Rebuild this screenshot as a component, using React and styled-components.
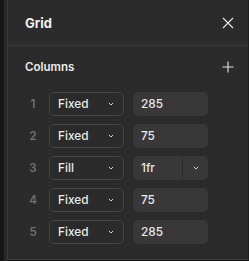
import React from 'react';
import styled, { createGlobalStyle } from 'styled-components';

const Global = createGlobalStyle`
  html, body {
    margin: 0;
    padding: 0;
    background: #161616;
  }
  body {
    font-family: Inter, "Noto Sans", sans-serif;
    -webkit-font-smoothing: antialiased;
  }
`;

const Frame = styled.div`
  width: 249px;
  height: 261px;
  display: flex;
  background: #161616;
  padding-left: 4px;
  box-sizing: border-box;
  overflow: hidden;
`;

const Gutter = styled.div`
  width: 3px;
  background: #292929;
`;

const Panel = styled.div`
  flex: 1;
  height: 260px;
  background: #2b2b2b;
  border-left: 1px solid #3a3a3a;
  border-bottom: 1px solid #3a3a3a;
  border-right: 1px solid #1f1f1f;
  box-sizing: border-box;
  display: flex;
  flex-direction: column;
`;

const Header = styled.div`
  height: 45px;
  display: flex;
  align-items: center;
  justify-content: space-between;
  padding: 0 14px 0 17px;
  border-bottom: 1px solid #3b3b3b;
  box-sizing: content-box;
`;

const Title = styled.h2`
  margin: 0;
  font-size: 13px;
  font-weight: 700;
  color: #f0f0f0;
`;

const IconButton = styled.button`
  background: none;
  border: 0;
  padding: 0;
  width: 12px;
  height: 12px;
  display: flex;
  align-items: center;
  justify-content: center;
  color: #e6e6e6;
`;

const Section = styled.div`
  padding: 0 14px 0 17px;
`;

const SectionHead = styled.div`
  height: 42px;
  display: flex;
  align-items: center;
  justify-content: space-between;
  margin-bottom: 4px;
`;

const SectionTitle = styled.span`
  font-size: 11.5px;
  font-weight: 600;
  color: #ececec;
`;

const Rows = styled.div`
  display: flex;
  flex-direction: column;
  gap: 8px;
`;

const Row = styled.div`
  display: grid;
  grid-template-columns: 16px 75px 76px;
  column-gap: 8px;
  align-items: center;
  height: 24px;
  & > :nth-child(3) { margin-left: 1px; }
`;

const Index = styled.span`
  font-size: 11.5px;
  font-weight: 600;
  color: #6f6f6f;
  text-align: center;
`;

const Select = styled.div`
  height: 24px;
  box-sizing: border-box;
  border: 1px solid #444;
  border-radius: 5px;
  display: flex;
  align-items: center;
  justify-content: space-between;
  padding: 0 9px 0 8px;
  font-size: 11.8px;
  font-weight: 500;
  color: #eaeaea;
`;

const Field = styled.div`
  height: 24px;
  border-radius: 5px;
  background: #383838;
  display: flex;
  align-items: center;
  overflow: hidden;
  font-size: 11.8px;
  font-weight: 500;
  color: #eaeaea;
`;

const FieldValue = styled.span`
  flex: 1;
  padding-left: 8px;
`;

const FieldMenu = styled.span`
  width: 25px;
  height: 100%;
  border-left: 1px solid #2b2b2b;
  display: flex;
  align-items: center;
  justify-content: center;
`;

const Chevron = () => (
  <svg width="6" height="4" viewBox="0 0 6 4" fill="none">
    <path d="M0.8 0.8 L3 3 L5.2 0.8" stroke="#cfcfcf" strokeWidth="1" />
  </svg>
);

const columns = [
  { type: 'Fixed', value: '285' },
  { type: 'Fixed', value: '75' },
  { type: 'Fill', value: '1fr', menu: true },
  { type: 'Fixed', value: '75' },
  { type: 'Fixed', value: '285' },
];

export default function App() {
  return (
    <>
      <Global />
      <Frame>
        <Gutter />
        <Panel>
          <Header>
            <Title>Grid</Title>
            <IconButton aria-label="Close">
              <svg width="12" height="12" viewBox="0 0 12 12">
                <path d="M1 1 L11 11 M11 1 L1 11" stroke="#e6e6e6" strokeWidth="1.1" />
              </svg>
            </IconButton>
          </Header>
          <Section>
            <SectionHead>
              <SectionTitle>Columns</SectionTitle>
              <IconButton aria-label="Add column">
                <svg width="12" height="12" viewBox="0 0 12 12">
                  <path d="M6 0.5 V11.5 M0.5 6 H11.5" stroke="#e6e6e6" strokeWidth="1.1" />
                </svg>
              </IconButton>
            </SectionHead>
            <Rows>
              {columns.map((c, i) => (
                <Row key={i}>
                  <Index>{i + 1}</Index>
                  <Select>
                    <span>{c.type}</span>
                    <Chevron />
                  </Select>
                  <Field>
                    <FieldValue>{c.value}</FieldValue>
                    {c.menu && (
                      <FieldMenu>
                        <Chevron />
                      </FieldMenu>
                    )}
                  </Field>
                </Row>
              ))}
            </Rows>
          </Section>
        </Panel>
      </Frame>
    </>
  );
}
